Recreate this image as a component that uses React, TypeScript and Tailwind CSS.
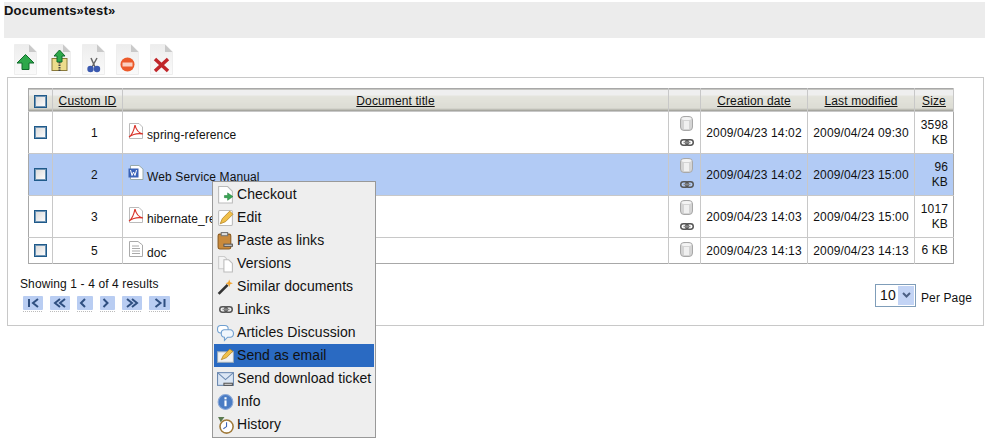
import type { ReactNode } from "react";

const PageBase = ({ children }: { children?: ReactNode }) => (
  <svg width="23" height="31" viewBox="0 0 23 31">
    <defs>
      <linearGradient id="pageFade" x1="0" y1="0" x2="0" y2="1">
        <stop offset="0" stopColor="#ededed" />
        <stop offset="1" stopColor="#fafafa" />
      </linearGradient>
    </defs>
    <path d="M0.5 0.5H15L22.5 8V30.5H0.5Z" fill="url(#pageFade)" stroke="#eeeeee" />
    <path d="M15 0.5V8H22.5Z" fill="#c9c9c9" />
    {children}
  </svg>
);

const toolbarIcons = [
  <PageBase key="up">
    <path d="M11.5 10.5L20 19H15V25.5H8V19H3Z" fill="#2da84a" stroke="#0f6b2a" />
  </PageBase>,
  <PageBase key="zip">
    <rect x="4" y="14.5" width="15" height="12" fill="#ecdc8c" stroke="#8a7a3a" />
    <path d="M11.5 6L17 12H14V18H9V12H6Z" fill="#2da84a" stroke="#0f6b2a" />
    <path d="M11.5 18V27" stroke="#444" strokeWidth="2" strokeDasharray="1.5 1" />
  </PageBase>,
  <PageBase key="cut">
    <path d="M9 14L13 23M15 14L10 23" stroke="#666" strokeWidth="1.5" />
    <circle cx="8.5" cy="25" r="3.2" fill="#3a59b0" />
    <circle cx="15" cy="25" r="3.2" fill="#3a59b0" />
  </PageBase>,
  <PageBase key="stop">
    <circle cx="11.5" cy="20.5" r="7" fill="#ec5a2a" />
    <rect x="6.5" y="18.5" width="10" height="4" fill="#fbd0c0" />
  </PageBase>,
  <PageBase key="delete">
    <path d="M5 15L18 27M18 15L5 27" stroke="#c0262a" strokeWidth="3.5" />
  </PageBase>,
];

const CheckBox = () => (
  <div className="mx-auto h-[13px] w-[13px] border border-[#1f5a8a] bg-gradient-to-br from-[#d8d8d8] to-white shadow-[inset_0_0_0_1px_#6f94b4]" />
);

const PdfIcon = () => (
  <svg width="16" height="16" viewBox="0 0 16 16" className="shrink-0">
    <path d="M1.5 0.5H11L14.5 4V15.5H1.5Z" fill="#fff" stroke="#bbb" />
    <path d="M7 2C6 7 4 12 1 14C5 11 10 10 15 11C11 10 8 7 7 2Z" fill="none" stroke="#d9342b" strokeWidth="1.2" />
  </svg>
);

const WordIcon = () => (
  <svg width="16" height="16" viewBox="0 0 16 16" className="shrink-0">
    <path d="M2.5 0.5H11L15 4V14.5H2.5Z" fill="#fff" stroke="#9aa" />
    <rect x="0.5" y="3.5" width="10" height="9" fill="#3a64b8" />
    <path d="M2.5 5L4 10.5L5.5 7L7 10.5L8.5 5" fill="none" stroke="#fff" />
  </svg>
);

const TextIcon = () => (
  <svg width="16" height="16" viewBox="0 0 16 16" className="shrink-0">
    <path d="M1.5 0.5H10L14.5 4V15.5H1.5Z" fill="#fff" stroke="#aaa" />
    <path d="M4 5H11M4 7.5H12M4 10H12M4 12.5H12" stroke="#aaa" />
  </svg>
);

const DbIcon = () => (
  <svg width="13" height="15" viewBox="0 0 13 15" className="block">
    <rect x="0.5" y="0.5" width="12" height="14" rx="3.5" fill="#d4d4d4" stroke="#a8a8a8" />
    <ellipse cx="6.5" cy="2.5" rx="5" ry="1.6" fill="#f4f4f4" />
    <rect x="4" y="5" width="5" height="8" fill="#f0f0f0" />
  </svg>
);

const LinkIcon = () => (
  <svg width="14" height="7" viewBox="0 0 14 7" className="block">
    <rect x="0.75" y="0.75" width="7.5" height="5.5" rx="2.7" fill="none" stroke="#555" strokeWidth="1.5" />
    <rect x="5.75" y="0.75" width="7.5" height="5.5" rx="2.7" fill="none" stroke="#555" strokeWidth="1.5" />
    <path d="M3.5 3.5H10.5" stroke="#888" strokeWidth="1.5" />
  </svg>
);

const rows = [
  { id: "1", title: "spring-reference", icon: <PdfIcon />, created: "2009/04/23 14:02", modified: "2009/04/24 09:30", size: ["3598", "KB"], link: true },
  { id: "2", title: "Web Service Manual", icon: <WordIcon />, created: "2009/04/23 14:02", modified: "2009/04/23 15:00", size: ["96", "KB"], link: true, selected: true },
  { id: "3", title: "hibernate_reference", icon: <PdfIcon />, created: "2009/04/23 14:03", modified: "2009/04/23 15:00", size: ["1017", "KB"], link: true },
  { id: "5", title: "doc", icon: <TextIcon />, created: "2009/04/23 14:13", modified: "2009/04/23 14:13", size: ["6 KB"], link: false },
];

const pagerPaths = [
  { w: 20, d: "M6 3V11M15 3L10 7L15 11" },
  { w: 20, d: "M10 3L5 7L10 11M15 3L10 7L15 11" },
  { w: 16, d: "M10 3L6 7L10 11" },
  { w: 15, d: "M6 3L10 7L6 11" },
  { w: 20, d: "M5 3L10 7L5 11M10 3L15 7L10 11" },
  { w: 21, d: "M6 3L11 7L6 11M15 3V11" },
];

const MenuPage = ({ children }: { children?: ReactNode }) => (
  <svg width="17" height="18" viewBox="0 0 16 17">
    {children}
  </svg>
);

const menuItems: { label: string; active?: boolean; icon: ReactNode }[] = [
  {
    label: "Checkout",
    icon: (
      <MenuPage>
        <path d="M1.5 0.5H10L14.5 5V16H1.5Z" fill="#fff" stroke="#bbb" />
        <path d="M7 9H10V6.5L15 10L10 13.5V11H7Z" fill="#3aa655" stroke="#1f7a38" strokeWidth="0.5" />
      </MenuPage>
    ),
  },
  {
    label: "Edit",
    icon: (
      <MenuPage>
        <rect x="1.5" y="1.5" width="13" height="14" rx="1" fill="#fff" stroke="#bbb" />
        <path d="M3 14L5 9L12 2L15 5L8 12Z" fill="#f0c04a" stroke="#b08020" strokeWidth="0.7" />
      </MenuPage>
    ),
  },
  {
    label: "Paste as links",
    icon: (
      <MenuPage>
        <rect x="1" y="2" width="12" height="14" rx="1.5" fill="#c98a3c" stroke="#8a5a20" />
        <rect x="4" y="0.5" width="6" height="3" fill="#ddd" stroke="#777" />
        <path d="M6 12.5H15" stroke="#555" strokeWidth="3" />
        <path d="M7 12.5H14" stroke="#ddd" strokeWidth="1" />
      </MenuPage>
    ),
  },
  {
    label: "Versions",
    icon: (
      <MenuPage>
        <path d="M1.5 1.5H7L9 3.5V13H1.5Z" fill="#f4f4f4" stroke="#ccc" />
        <path d="M6.5 4.5H11L14.5 8V16H6.5Z" fill="#fff" stroke="#bbb" />
      </MenuPage>
    ),
  },
  {
    label: "Similar documents",
    icon: (
      <MenuPage>
        <path d="M1.5 15L10 6.5" stroke="#333" strokeWidth="2.5" />
        <path d="M11.5 1.5L12.5 4L15 5L12.5 6L11.5 8.5L10.5 6L8 5L10.5 4Z" fill="#f2a32c" />
      </MenuPage>
    ),
  },
  {
    label: "Links",
    icon: <LinkIcon />,
  },
  {
    label: "Articles Discussion",
    icon: (
      <MenuPage>
        <rect x="0.5" y="1.5" width="10" height="7" rx="3" fill="#fff" stroke="#6f9fd0" />
        <path d="M6.5 5.5H12.5A3 3 0 0 1 15.5 8.5V9.5A3 3 0 0 1 12.5 12.5H10L7 15.5V12.5A3 3 0 0 1 4 9.5V8.5A3 3 0 0 1 6.5 5.5Z" fill="#f0f6fc" stroke="#6f9fd0" />
      </MenuPage>
    ),
  },
  {
    label: "Send as email",
    active: true,
    icon: (
      <MenuPage>
        <rect x="0.5" y="4.5" width="15" height="10" fill="#f2f2f2" stroke="#9ab" />
        <path d="M4 12L6 8L12 2L15 4L9 10Z" fill="#f0c04a" stroke="#b08020" strokeWidth="0.7" />
      </MenuPage>
    ),
  },
  {
    label: "Send download ticket",
    icon: (
      <MenuPage>
        <rect x="0.5" y="2.5" width="15" height="12" fill="#dbe6f4" stroke="#6a88b0" />
        <path d="M0.5 2.5L8 9L15.5 2.5" fill="none" stroke="#6a88b0" />
        <path d="M6 13.5H15" stroke="#555" strokeWidth="3" />
        <path d="M7 13.5H14" stroke="#ddd" strokeWidth="1" />
      </MenuPage>
    ),
  },
  {
    label: "Info",
    icon: (
      <MenuPage>
        <circle cx="8" cy="8.5" r="7" fill="#4a7cc4" stroke="#8aa8d8" />
        <rect x="7" y="7" width="2" height="5.5" fill="#fff" />
        <rect x="7" y="4" width="2" height="2" fill="#fff" />
      </MenuPage>
    ),
  },
  {
    label: "History",
    icon: (
      <MenuPage>
        <circle cx="9" cy="10" r="6.2" fill="#fff" stroke="#a07a3a" strokeWidth="1.5" />
        <path d="M9 6V10L6 12" fill="none" stroke="#3a64b8" />
        <path d="M1 1H7L3.5 6Z" fill="#5a7a50" />
      </MenuPage>
    ),
  },
];

const headerCell =
  "h-[23px] border-r border-[#c8c8c8] bg-[linear-gradient(#efefef_0%,#efefef_25%,#e4e4dc_30%,#dcdcd4_85%,#8f8f88_100%)] p-0 pt-[2px] text-center font-normal";

export default function App() {
  return (
    <div className="relative h-[445px] w-[989px] overflow-hidden bg-white pt-[2px] font-['Liberation_Sans',Arial,sans-serif] text-[12px] tracking-[0.12px] text-[#111]">
      <div className="mx-[4px] h-[36px] bg-[#ececec] text-[13px] leading-[17px] font-bold tracking-[0.2px]">Documents»test»</div>

      <div className="mt-[6px] flex h-[33px] gap-[11px] pl-[14px]">{toolbarIcons}</div>

      <div className="mr-[5px] ml-[7px] h-[249px] border border-[#c8c8c8] pt-[10px] pl-[20px]">
        <table className="w-[925px] table-fixed border-collapse border border-[#a8a8a8]">
          <colgroup>
            <col className="w-[24px]" />
            <col className="w-[70px]" />
            <col className="w-[546px]" />
            <col className="w-[32px]" />
            <col className="w-[107px]" />
            <col className="w-[107px]" />
            <col className="w-[39px]" />
          </colgroup>
          <thead>
            <tr>
              <th className={headerCell}>
                <CheckBox />
              </th>
              <th className={headerCell}>
                <span className="underline">Custom ID</span>
              </th>
              <th className={headerCell}>
                <span className="underline">Document title</span>
              </th>
              <th className={headerCell} />
              <th className={headerCell}>
                <span className="underline">Creation date</span>
              </th>
              <th className={headerCell}>
                <span className="underline">Last modified</span>
              </th>
              <th className={headerCell}>
                <span className="underline">Size</span>
              </th>
            </tr>
          </thead>
          <tbody>
            {rows.map((row) => (
              <tr
                key={row.id}
                className={`${row.link ? "h-[42px]" : "h-[26px]"} border-t border-[#c8c8c8] ${row.selected ? "bg-[#b2cbf5]" : "bg-white"}`}
              >
                <td className="border-r border-[#c8c8c8] p-0">
                  <CheckBox />
                </td>
                <td className="border-r border-[#c8c8c8] p-0 pl-[14px] text-center">{row.id}</td>
                <td className="border-r border-[#c8c8c8] p-0 pl-[5px]">
                  <div className="flex items-start gap-[3px]">
                    {row.icon}
                    <span className="pt-[5px] leading-[14px] whitespace-nowrap">{row.title}</span>
                  </div>
                </td>
                <td className="border-r border-[#c8c8c8] p-0 pt-[4px] pl-[11px] align-top">
                  <div className="flex flex-col gap-[8px]">
                    <DbIcon />
                    {row.link && <LinkIcon />}
                  </div>
                </td>
                <td className="border-r border-[#c8c8c8] p-0 text-center whitespace-nowrap">{row.created}</td>
                <td className="border-r border-[#c8c8c8] p-0 text-center whitespace-nowrap">{row.modified}</td>
                <td className="p-0 pr-[5px] text-right leading-[15px]">
                  {row.size.map((part) => (
                    <div key={part}>{part}</div>
                  ))}
                </td>
              </tr>
            ))}
          </tbody>
        </table>

        <div className="mt-[13px] flex items-start justify-between pr-[11px]">
          <div className="-ml-[8px]">
            <div className="leading-[14px]">Showing 1 - 4 of 4 results</div>
            <div className="mt-[5px] ml-[3px] flex gap-[7px]">
              {pagerPaths.map((btn) => (
                <svg key={btn.d} width={btn.w} height="16" viewBox={`0 0 ${btn.w} 16`}>
                  <rect x="0" y="0" width={btn.w} height="14" rx="1" fill="#b9cdf2" />
                  <path d={btn.d} transform={`translate(${(btn.w - 20) / 2} 0)`} fill="none" stroke="#2f4f80" strokeWidth="2" />
                  <path d={`M0 15.5H${btn.w}`} stroke="#bbb" strokeDasharray="1 1" />
                </svg>
              ))}
            </div>
          </div>
          <div className="mt-[6px] flex items-center gap-[5px]">
            <div className="flex h-[23px] w-[41px] items-center justify-between border border-[#7f9db9] pl-[4px] text-[14px]">
              10
              <div className="m-[1px] flex h-[19px] w-[16px] items-center justify-center bg-[#c3d4f5]">
                <svg width="9" height="6" viewBox="0 0 9 6">
                  <path d="M1 1L4.5 4.5L8 1" fill="none" stroke="#4d6185" strokeWidth="2" />
                </svg>
              </div>
            </div>
            <span className="pt-[6px]">Per Page</span>
          </div>
        </div>
      </div>

      <div className="absolute top-[181px] left-[212px] w-[164px] border border-[#999] bg-[#eeeeee] p-[1px] text-[14px] tracking-[0.06px] text-[#111]">
        {menuItems.map((item) => (
          <div
            key={item.label}
            className={`flex h-[23px] items-center gap-[3px] pl-[3px] whitespace-nowrap ${item.active ? "bg-[#2a6ac2]" : ""}`}
          >
            <span className="flex h-[18px] w-[17px] shrink-0 items-center justify-center">{item.icon}</span>
            {item.label}
          </div>
        ))}
      </div>
    </div>
  );
}
